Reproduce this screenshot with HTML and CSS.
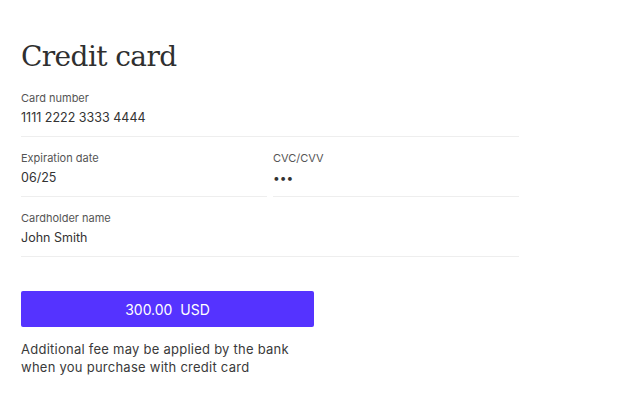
FILE: index.html
```html
<!DOCTYPE html>
<html lang="en">
<head>
    <meta charset="UTF-8">
    <meta name="viewport" content="width=device-width, initial-scale=1.0">
    <title>Credit card</title>
    <link rel="stylesheet" href="styles.css">
</head>
<body>
    <div class="container">
        <h1>Credit card</h1>

        <div class="card-form">
            <div class="field">
                <label>Card number</label>
                <div class="value">1111 2222 3333 4444</div>
            </div>
            <div class="field-row">
                <div class="field">
                    <label>Expiration date</label>
                    <div class="value">06/25</div>
                </div>
                <div class="field">
                    <label>CVC/CVV</label>
                    <div class="value secret">&bull;&bull;&bull;</div>
                </div>
            </div>
            <div class="field">
                <label>Cardholder name</label>
                <div class="value">John Smith</div>
            </div>
        </div>

        <button class="pay-button">300.00&nbsp; USD</button>

        <p class="note">Additional fee may be applied by the bank<br>when you purchase with credit card</p>
    </div>
</body>
</html>
```

FILE: styles.css
```css
body {
    font-family: Inter, "Noto Sans", sans-serif;
    margin: 0;
    padding: 0;
    background-color: #ffffff;
    color: #333333;
}
.container {
    padding: 37px 21px 0 21px;
    width: 498px;
}
h1 {
    font-family: "DejaVu Serif", serif;
    font-weight: normal;
    font-size: 28px;
    line-height: 40px;
    margin: 0;
    color: #2f2f2f;
    letter-spacing: -0.6px;
}
.field-row {
    display: grid;
    grid-template-columns: 1fr 1fr;
    gap: 6px;
}
.field {
    padding: 13px 0 8px 0;
    border-bottom: 1px solid #eeeeee;
}
.field label {
    display: block;
    font-size: 11px;
    line-height: 16px;
    color: #555555;
}
.field .value {
    margin-top: 2px;
    font-size: 12.5px;
    line-height: 20px;
    color: #333333;
}
.field .secret {
    font-size: 12px;
}
.pay-button {
    display: block;
    width: 293px;
    height: 36px;
    margin-top: 34px;
    background-color: #5533ff;
    color: white;
    border: none;
    border-radius: 2px;
    font-family: Inter, "Noto Sans", sans-serif;
    font-size: 14px;
    cursor: pointer;
}
.note {
    margin: 13px 0 0 0;
    font-size: 13px;
    line-height: 18px;
    letter-spacing: 0.25px;
    color: #3a3a3a;
}
```
